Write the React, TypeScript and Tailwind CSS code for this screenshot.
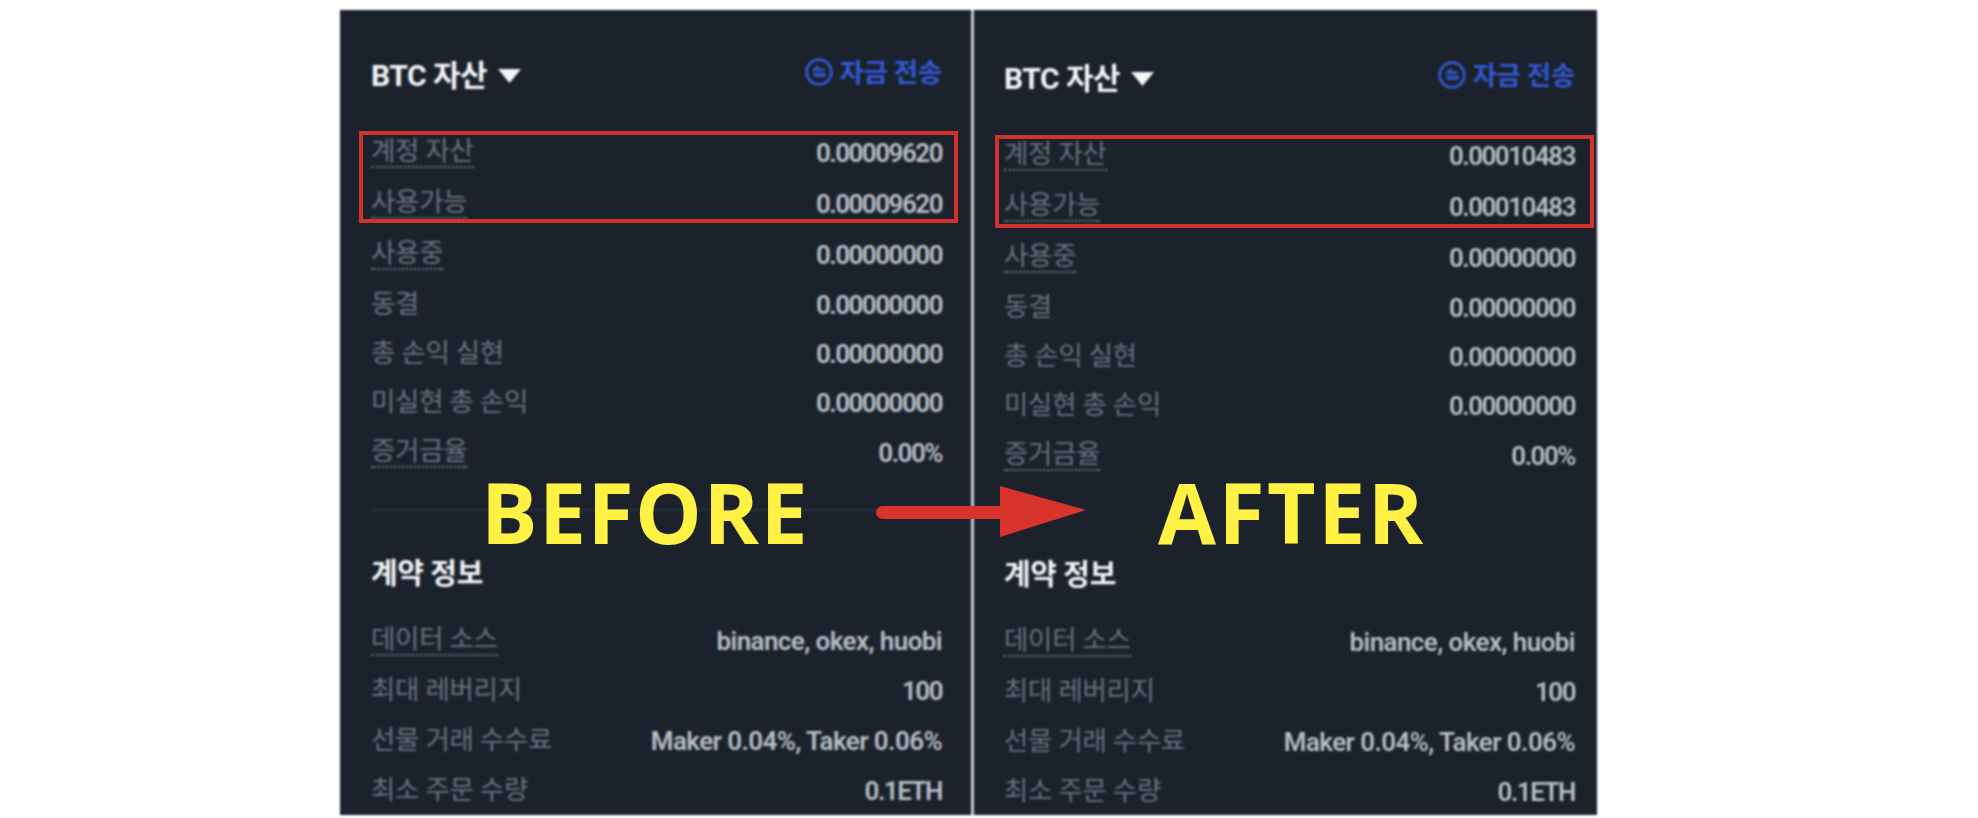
const positions = [
  { label: "계정 자산", value: "0.00009620", after: "0.00010483", dotted: true },
  { label: "사용가능", value: "0.00009620", after: "0.00010483", dotted: true },
  { label: "사용중", value: "0.00000000", after: "0.00000000", dotted: true },
  { label: "동결", value: "0.00000000", after: "0.00000000" },
  { label: "총 손익 실현", value: "0.00000000", after: "0.00000000" },
  { label: "미실현 총 손익", value: "0.00000000", after: "0.00000000" },
  { label: "증거금율", value: "0.00%", after: "0.00%", dotted: true },
];

const contract = [
  { label: "데이터 소스", value: "binance, okex, huobi", dotted: true, wide: true },
  { label: "최대 레버리지", value: "100" },
  { label: "선물 거래 수수료", value: "Maker 0.04%, Taker 0.06%", wide: true },
  { label: "최소 주문 수량", value: "0.1ETH" },
];

function TransferIcon() {
  return (
    <svg width="28" height="28" viewBox="0 0 28 28" fill="none" className="shrink-0">
      <circle cx="14" cy="14" r="12.3" stroke="#3358d4" strokeWidth="2.8" />
      <path d="M19.5 11.5H9.5l3.8-3.6" stroke="#3358d4" strokeWidth="2.4" />
      <path d="M8 15.5h11.5v2.6H9" stroke="#3358d4" strokeWidth="2" />
    </svg>
  );
}

function Row({
  label,
  value,
  dotted,
  wide,
  className,
}: {
  label: string;
  value: string;
  dotted?: boolean;
  wide?: boolean;
  className: string;
}) {
  return (
    <div className={`flex items-center justify-between ${className}`}>
      {dotted ? (
        <span className="border-b-2 border-dotted border-[#6f7885] text-[26.5px] leading-[30px] tracking-[-0.3px] text-[#69727f]">
          {label}
        </span>
      ) : (
        <span className="text-[26.5px] leading-[30px] tracking-[-0.3px] text-[#69727f]">{label}</span>
      )}
      <span
        className={`pt-[2px] text-[26px] font-semibold leading-[30px] text-[#b8bec7] ${
          wide ? "tracking-[-0.6px]" : "tracking-[-1.5px]"
        }`}
      >
        {value}
      </span>
    </div>
  );
}

function Panel({ after, className }: { after?: boolean; className: string }) {
  return (
    <div className={`flex h-[805px] flex-col overflow-hidden bg-[#1b222c] ${className}`}>
      {after ? (
        <div className="mt-[3px] mb-[40px] h-[2px] bg-[#263240]" />
      ) : (
        <div className="h-[40px]" />
      )}

      <div className="flex h-[44px] items-center justify-between">
        <div className="flex items-center gap-[11px] pt-[6px] text-[30px] font-bold tracking-[-0.5px] text-[#f2f4f6]">
          <span>BTC 자산</span>
          <svg width="23" height="14" viewBox="0 0 23 14" className="mt-[2px]">
            <path d="M0 0h23L11.5 14z" fill="#f2f4f6" />
          </svg>
        </div>
        <div className="flex items-center gap-[6px] text-[26.5px] font-semibold tracking-[-0.3px] text-[#3358d4]">
          <TransferIcon />
          <span className="pt-[2px]">자금 전송</span>
        </div>
      </div>

      <div className="mt-[32px] flex flex-col">
        {positions.map((row) => (
          <Row
            key={row.label}
            label={row.label}
            value={after ? row.after : row.value}
            dotted={row.dotted}
            className={row.dotted ? "h-[51px]" : "h-[49px]"}
          />
        ))}
      </div>

      <div className="mt-[32px] h-[2px] bg-[#263240]" />

      <div className="mt-[44px] flex h-[40px] items-center text-[29px] font-bold tracking-[-0.4px] text-[#f2f4f6]">
        계약 정보
      </div>

      <div className="mt-[19px] flex flex-col">
        {contract.map((row) => (
          <Row key={row.label} {...row} className={row.dotted ? "h-[51px]" : "h-[50px]"} />
        ))}
      </div>
    </div>
  );
}

export default function App() {
  return (
    <div className="relative h-[818px] w-[1978px] overflow-hidden bg-white font-['Roboto','Noto_Sans_CJK_KR',sans-serif]">
      <div className="flex pt-[10px] pl-[340px] blur-[0.8px]">
        <Panel className="w-[631px] pr-[29px] pl-[31px]" />
        <div className="relative z-10 w-[3px] bg-[#c9cbcd]" />
        <Panel after className="w-[623px] pr-[22px] pl-[30px]" />
      </div>

      {/* Red highlight boxes */}
      <div className="absolute top-[131px] left-[359px] h-[92px] w-[599px] border-4 border-[#d2322d] blur-[0.4px]" />
      <div className="absolute top-[135px] left-[995px] h-[93px] w-[599px] border-4 border-[#d2322d] blur-[0.4px]" />

      {/* Before / after captions */}
      <div className="absolute top-[455px] left-[481px] font-['Open_Sans',sans-serif] text-[84px] leading-[114px] font-bold tracking-[1.5px] text-[#fff244] blur-[0.4px]">
        BEFORE
      </div>
      <div className="absolute top-[455px] left-[1158px] font-['Open_Sans',sans-serif] text-[84px] leading-[114px] font-bold tracking-[2.5px] text-[#fff244] blur-[0.4px]">
        AFTER
      </div>

      <svg
        width="212"
        height="52"
        viewBox="0 0 212 52"
        className="absolute top-[486px] left-[876px] blur-[0.4px]"
      >
        <rect x="0" y="20" width="130" height="13" rx="6.5" fill="#d9342b" />
        <path d="M124 0L210 24L124 51z" fill="#d9342b" />
      </svg>
    </div>
  );
}
